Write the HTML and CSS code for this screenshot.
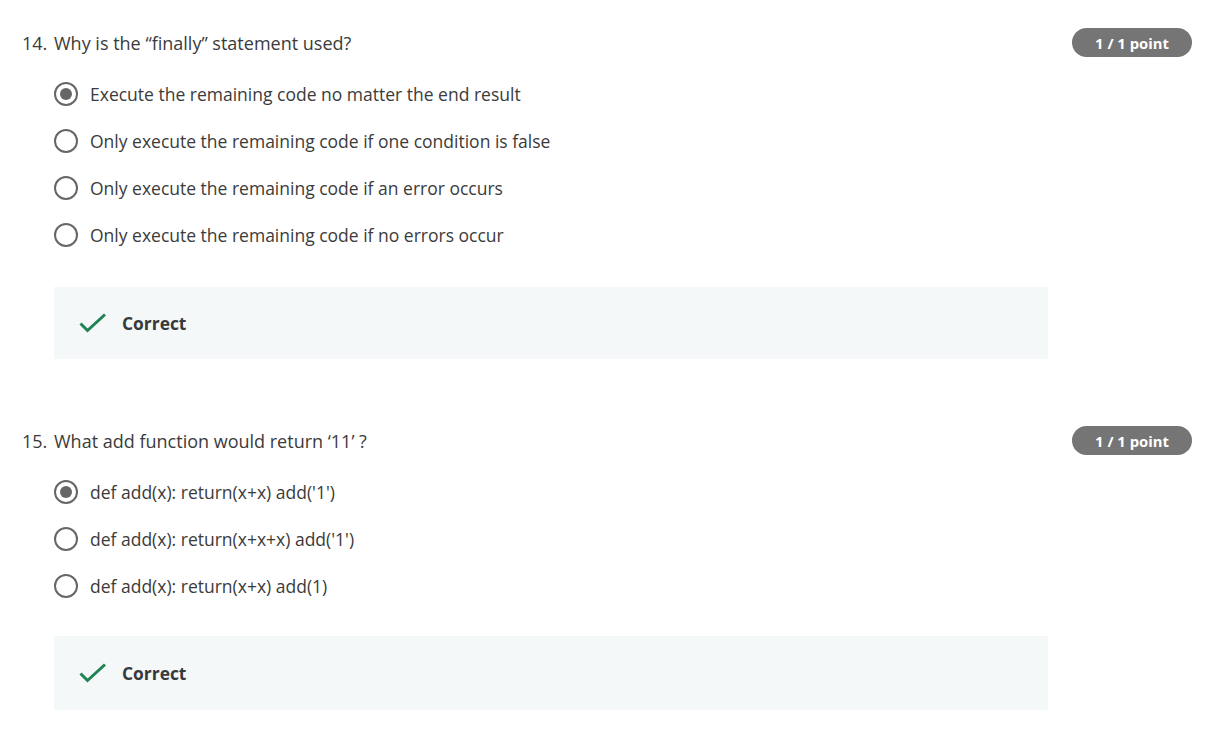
FILE: index.html
```html
<!DOCTYPE html>
<html>
<head>
<meta charset="utf-8">
<link rel="stylesheet" href="styles.css">
</head>
<body>
<div class="question">
  <div class="q-header">
    <div class="q-title"><span class="q-num">14.</span><span>Why is the “finally” statement used?</span></div>
    <div class="badge">1 / 1 point</div>
  </div>
  <div class="options">
    <div class="option"><span class="radio checked"></span><span class="opt-text">Execute the remaining code no matter the end result</span></div>
    <div class="option"><span class="radio"></span><span class="opt-text">Only execute the remaining code if one condition is false</span></div>
    <div class="option"><span class="radio"></span><span class="opt-text">Only execute the remaining code if an error occurs</span></div>
    <div class="option"><span class="radio"></span><span class="opt-text">Only execute the remaining code if no errors occur</span></div>
  </div>
  <div class="feedback">
    <svg class="check" width="28" height="20" viewBox="0 0 28 20"><polyline points="1.5,10.5 8.5,17.5 26,1.5" fill="none" stroke="#1f8354" stroke-width="3"/></svg>
    <span class="fb-text">Correct</span>
  </div>
</div>
<div class="question q2">
  <div class="q-header">
    <div class="q-title"><span class="q-num">15.</span><span>What add function would return ‘11’ ?</span></div>
    <div class="badge">1 / 1 point</div>
  </div>
  <div class="options">
    <div class="option"><span class="radio checked"></span><span class="opt-text">def add(x): return(x+x) add('1')</span></div>
    <div class="option"><span class="radio"></span><span class="opt-text">def add(x): return(x+x+x) add('1')</span></div>
    <div class="option"><span class="radio"></span><span class="opt-text">def add(x): return(x+x) add(1)</span></div>
  </div>
  <div class="feedback fb2">
    <svg class="check" width="28" height="20" viewBox="0 0 28 20"><polyline points="1.5,10.5 8.5,17.5 26,1.5" fill="none" stroke="#1f8354" stroke-width="3"/></svg>
    <span class="fb-text">Correct</span>
  </div>
</div>
</body>
</html>
```
FILE: styles.css
```css
html, body {
  margin: 0;
  padding: 0;
  background: #ffffff;
}
body {
  font-family: "Open Sans", "Noto Sans", sans-serif;
  color: #373a3c;
  font-size: 16px;
}
.question {
  padding: 28px 23px 0 22px;
}
.q2 {
  padding-top: 67px;
}
.q-header {
  display: flex;
  align-items: center;
  justify-content: space-between;
  height: 29px;
}
.q-title {
  display: flex;
  font-size: 18px;
  line-height: 26px;
  color: #3b3b3b;
}
.q-num {
  width: 32px;
  flex: none;
}
.badge {
  width: 120px;
  height: 29px;
  border-radius: 15px;
  background: #757575;
  color: #ffffff;
  font-weight: 700;
  font-size: 14.8px;
  display: flex;
  align-items: center;
  justify-content: center;
}
.options {
  margin-top: 13px;
  padding-left: 32px;
}
.option {
  display: flex;
  align-items: center;
  height: 47px;
}
.radio {
  box-sizing: border-box;
  width: 24px;
  height: 24px;
  border: 2px solid #666666;
  border-radius: 50%;
  display: flex;
  align-items: center;
  justify-content: center;
  margin-right: 12px;
  flex: none;
}
.radio.checked::after {
  content: "";
  width: 12px;
  height: 12px;
  border-radius: 50%;
  background: #666666;
}
.opt-text {
  font-size: 17.5px;
  line-height: 24px;
  color: #3b3b3b;
}
.feedback {
  margin-top: 29px;
  margin-left: 32px;
  width: 994px;
  height: 72px;
  background: #f5f8f8;
  display: flex;
  align-items: center;
  padding-left: 25px;
  box-sizing: border-box;
}
.fb2 {
  margin-top: 27px;
  height: 74px;
}
.check {
  margin-right: 15px;
  flex: none;
}
.fb-text {
  font-weight: 700;
  font-size: 17.4px;
  color: #373a3c;
}
```
